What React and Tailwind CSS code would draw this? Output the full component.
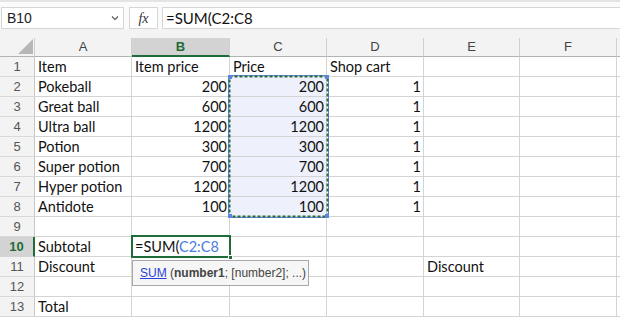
import React from "react";

const COLS = [
  { key: "A", w: "w-[97px]" },
  { key: "B", w: "w-[98px]" },
  { key: "C", w: "w-[97px]" },
  { key: "D", w: "w-[97px]" },
  { key: "E", w: "w-[96px]" },
  { key: "F", w: "w-[97px]" },
];

const items = [
  ["Pokeball", 200],
  ["Great ball", 600],
  ["Ultra ball", 1200],
  ["Potion", 300],
  ["Super potion", 700],
  ["Hyper potion", 1200],
  ["Antidote", 100],
];

function buildRows() {
  const rows = [];
  rows.push([
    { t: "Item" },
    { t: "Item price" },
    { t: "Price" },
    { t: "Shop cart" },
    {},
    {},
  ]);
  items.forEach(([n, p]) => {
    rows.push([
      { t: n },
      { t: String(p), r: true },
      { t: String(p), r: true, sel: true },
      { t: "1", r: true },
      {},
      {},
    ]);
  });
  rows.push([{}, {}, {}, {}, {}, {}]);
  rows.push([{ t: "Subtotal" }, { formula: true }, {}, {}, {}, {}]);
  rows.push([{ t: "Discount" }, {}, {}, {}, { t: "Discount" }, {}]);
  rows.push([{}, {}, {}, {}, {}, {}]);
  rows.push([{ t: "Total" }, {}, {}, {}, {}, {}]);
  return rows;
}

export default function App() {
  const rows = buildRows();
  return (
    <div
      className="w-[620px] h-[318px] overflow-hidden bg-white relative"
      style={{ fontFamily: "Lato, 'Open Sans', sans-serif" }}
    >
      {/* top strip */}
      <div className="h-[2px] bg-[#e4e4e4]" />
      {/* formula bar */}
      <div className="h-[27px] flex items-end pl-[1px] bg-[#fbfbfb]">
        <div className="w-[123px] h-[22px] border border-[#d6d6d6] bg-white flex items-center justify-between pl-[5px] pr-[4px]">
          <span
            className="text-[14px] text-[#222]"
            style={{ fontFamily: "'Liberation Sans', Arial, sans-serif" }}
          >
            B10
          </span>
          <svg width="8" height="6" viewBox="0 0 8 6">
            <path d="M1 1.5 L4 4.5 L7 1.5" fill="none" stroke="#555" strokeWidth="1.1" />
          </svg>
        </div>
        <div className="w-[5px]" />
        <div className="w-[29px] h-[22px] border border-[#d6d6d6] bg-white flex items-center justify-center">
          <span
            className="italic text-[14px] text-[#333]"
            style={{ fontFamily: "'Liberation Serif', 'Times New Roman', serif" }}
          >
            fx
          </span>
        </div>
        <div className="w-[4px]" />
        <div className="flex-1 h-[22px] border border-r-0 border-[#d6d6d6] bg-white flex items-center pl-[3px]">
          <span className="text-[15px] text-[#111]">=SUM(C2:C8</span>
        </div>
      </div>
      {/* header band */}
      <div className="h-[28px] bg-[#f3f3f3] flex items-end">
        <div className="w-[35px] h-[19px] border-r border-[#d0d0d0] border-b border-b-[#b3b3b3] relative">
          <svg className="absolute left-[18px] top-[1px]" width="15" height="15" viewBox="0 0 15 15">
            <path d="M15 0 L15 15 L0 15 Z" fill="#b7b7b7" />
          </svg>
        </div>
        {COLS.map((c) =>
          c.key === "B" ? (
            <div
              key={c.key}
              className={`${c.w} h-[19px] bg-[#d3d3d3] border-r border-[#d0d0d0] border-b-2 border-b-[#1f6b3a] flex items-center justify-center text-[13px] font-bold text-[#1f6b3a]`}
              style={{ fontFamily: "'Liberation Sans', Arial, sans-serif" }}
            >
              {c.key}
            </div>
          ) : (
            <div
              key={c.key}
              className={`${c.w} h-[19px] border-r border-[#d0d0d0] border-b border-b-[#b3b3b3] flex items-center justify-center text-[13px] text-[#444]`}
              style={{ fontFamily: "'Liberation Sans', Arial, sans-serif" }}
            >
              {c.key}
            </div>
          )
        )}
        <div className="flex-1 h-[19px] border-b border-b-[#b3b3b3]" />
      </div>
      {/* grid body */}
      <div className="relative">
        {rows.map((row, ri) => {
          const rn = ri + 1;
          const active = rn === 10;
          return (
            <div key={ri} className="flex h-[20px]">
              {active ? (
                <div
                  className="w-[35px] h-[20px] bg-[#d3d3d3] border-r-2 border-[#1f6b3a] border-b border-b-[#d4d4d4] flex items-center justify-center text-[13px] font-bold text-[#1f6b3a]"
                  style={{ fontFamily: "'Liberation Sans', Arial, sans-serif" }}
                >
                  {rn}
                </div>
              ) : (
                <div
                  className="w-[35px] h-[20px] bg-[#f3f3f3] border-r border-[#c8c8c8] border-b border-b-[#d9d9d9] flex items-center justify-center text-[13px] text-[#555]"
                  style={{ fontFamily: "'Liberation Sans', Arial, sans-serif" }}
                >
                  {rn}
                </div>
              )}
              {row.map((cell, ci) => (
                <div
                  key={ci}
                  className={`${COLS[ci].w} h-[20px] border-r border-b border-[#d4d4d4] flex items-end overflow-visible whitespace-nowrap text-[14.5px] leading-[18px] text-[#111] ${
                    cell.r ? "justify-end pr-[2px]" : "pl-[3px]"
                  } ${cell.sel ? "bg-[#eef0fb]" : ""}`}
                >
                  {cell.formula ? (
                    <span>
                      =SUM(<span className="text-[#4a7de0]">C2:C8</span>
                    </span>
                  ) : (
                    cell.t || ""
                  )}
                </div>
              ))}
              <div className="flex-1 h-[20px] border-b border-[#d4d4d4]" />
            </div>
          );
        })}

        {/* marching ants selection C2:C8 */}
        <svg
          className="absolute left-[228px] top-[18px]"
          width="101"
          height="143"
          viewBox="0 0 101 143"
        >
          <rect x="0.5" y="0.5" width="100" height="142" fill="none" stroke="#5b85e0" strokeWidth="1" />
          <rect x="1.5" y="1.5" width="98" height="140" fill="none" stroke="#2c6b3c" strokeWidth="2" strokeDasharray="3 2" />
          <rect x="0" y="0" width="4" height="4" fill="#5b85e0" />
          <rect x="97" y="0" width="4" height="4" fill="#5b85e0" />
          <rect x="0" y="139" width="4" height="4" fill="#5b85e0" />
          <rect x="97" y="139" width="4" height="4" fill="#5b85e0" />
        </svg>

        {/* active cell B10 */}
        <div className="absolute left-[131px] top-[178px] w-[100px] h-[23px] border-2 border-[#1f6b3a]" />
        <div className="absolute left-[228px] top-[198px] w-[5px] h-[5px] bg-[#1f6b3a] border border-white" />

        {/* tooltip */}
        <div
          className="absolute left-[132px] top-[203px] w-[177px] h-[26px] bg-[#f6f6f6] border border-[#a8a8a8] flex items-center pl-[7px] text-[12px] text-[#444] whitespace-nowrap"
          style={{ fontFamily: "'Liberation Sans', Arial, sans-serif" }}
        >
          <span className="text-[#2a3fd6] underline">SUM</span>
          <span>&nbsp;(</span>
          <span className="font-bold">number1</span>
          <span>; [number2]; ...)</span>
        </div>
      </div>
    </div>
  );
}
